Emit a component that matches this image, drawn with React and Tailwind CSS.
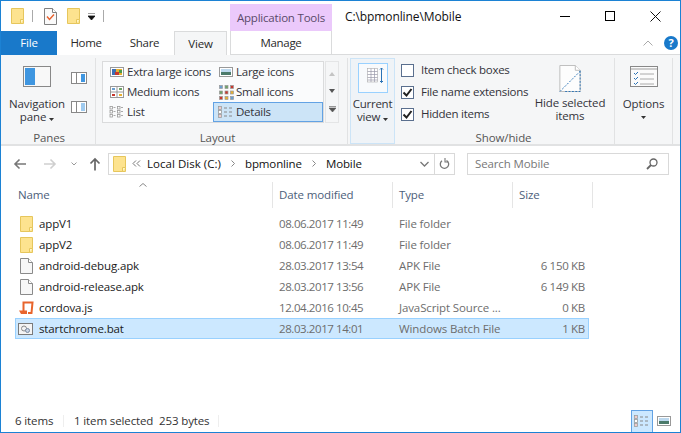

const Folder = ({ s = 1 }) => (
  <svg width={13 * s} height={16 * s} viewBox="0 0 13 16" className="shrink-0">
    <path d="M.5.5h12v15H.5z" fill="#fde38f" stroke="#e6c65c" />
    <path d="M9.5 15.5v-4h3" fill="#fff6c8" stroke="#e6c65c" />
  </svg>
);
const Doc = () => (
  <svg width="13" height="16" viewBox="0 0 13 16" className="shrink-0">
    <path d="M.5.5h8l4 4v11H.5z" fill="#f7f7f7" stroke="#8a8a8a" />
    <path d="M8.5.5v4h4" fill="#fff" stroke="#8a8a8a" />
  </svg>
);
const CheckDoc = () => (
  <svg width="13" height="17" viewBox="0 0 13 17" className="shrink-0">
    <path d="M.5.5h8l4 4v12H.5z" fill="#fafafa" stroke="#808080" />
    <path d="M8.5.5v4h4" fill="#fff" stroke="#808080" />
    <path d="M3 8.5l2.5 3L10 6.5" fill="none" stroke="#e8602c" strokeWidth="1.4" />
  </svg>
);
const Caret = ({ c = "#333" }) => (
  <svg width="5" height="3" viewBox="0 0 5 3" className="inline-block shrink-0"><path d="M0 0h5L2.5 3z" fill={c} /></svg>
);
const ListGlyph = ({ w = 18 }) => (
  <svg width={w} height="13" viewBox="0 0 18 13" className="shrink-0">
    {[1, 5, 9].map((y) => (
      <g key={y}>
        <rect x="1.5" y={y - 0.5} width="3" height="3" fill="#fff" stroke="#999" strokeWidth=".8" />
        <path d={`M7 ${y + 1}h3M12 ${y + 1}h3`} stroke="#888" />
      </g>
    ))}
    <rect x="2.5" y="1.5" width="1" height="1" fill="#c33" />
    <rect x="2.5" y="9.5" width="1" height="1" fill="#c33" />
  </svg>
);
const ListIcon = () => (
  <svg width="18" height="13" viewBox="0 0 18 13" className="shrink-0">
    {[2, 9.5].map((x) => [0.5, 4.5, 8.5].map((y) => (
      <g key={x + "" + y}>
        <rect x={x} y={y} width="2.5" height="2.5" fill="#fff" stroke="#999" strokeWidth=".8" />
        <path d={`M${x + 3.5} ${y + 1}h2`} stroke="#aaa" />
      </g>
    )))}
  </svg>
);
const Pic = ({ w = 14, h = 10, kind = 0 }) => (
  <svg width={w} height={h} viewBox="0 0 14 10" className="shrink-0">
    <rect x=".5" y=".5" width="13" height="9" fill="#fff" stroke="#999" />
    {kind === 0 ? (
      <>
        <rect x="2" y="2" width="10" height="6" fill="#e8b030" />
        <rect x="2" y="2" width="4" height="6" fill="#3b6fb5" />
        <rect x="5" y="5" width="4" height="3" fill="#c8382e" />
        <rect x="9" y="3" width="3" height="3" fill="#4c9a4a" />
      </>
    ) : (
      <>
        <rect x="2" y="2" width="10" height="3" fill="#bcd8ee" />
        <rect x="2" y="5" width="10" height="3" fill="#4b7a6a" />
      </>
    )}
  </svg>
);
const Grid4 = () => (
  <svg width="14" height="12" viewBox="0 0 14 12" className="shrink-0">
    <rect x=".5" y=".5" width="13" height="11" fill="#fff" stroke="#999" />
    <path d="M7 .5v11M.5 6h13" stroke="#999" />
    <rect x="2" y="2" width="3" height="2" fill="#6a9fd0" />
    <rect x="9" y="2" width="3" height="2" fill="#6fa36a" />
    <rect x="2" y="8" width="3" height="2" fill="#c8382e" />
    <rect x="9" y="8" width="3" height="2" fill="#e8b030" />
  </svg>
);
const Grid9 = () => (
  <svg width="15" height="15" viewBox="0 0 15 15" className="shrink-0">
    {[0, 5.5, 11].map((y, i) => [0, 5.5, 11].map((x, j) => (
      <rect key={i + "-" + j} x={x + .5} y={y + .5} width="3" height="3" fill={["#6a9fd0", "#6fa36a", "#c8382e", "#e8b030"][(i + j) % 4]} stroke="#999" strokeWidth=".7" />
    )))}
  </svg>
);

const GalleryItem = ({ icon, label, active, right }) => (
  <div className={`flex items-center h-5 w-[110px] ${active ? "bg-[#cce4f7] outline outline-1 outline-[#62a2e4] -outline-offset-1" : ""}`}>
    <div className={`${right ? "w-[23px]" : "w-[24px]"} pl-[3px] flex justify-center shrink-0`}>{icon}</div>
    <span className="whitespace-nowrap tracking-[-0.25px]">{label}</span>
  </div>
);
const Check = ({ on }) => (
  <span className="w-[13px] h-[13px] border border-[#5a6f8e] bg-white flex items-center justify-center shrink-0">
    {on && (
      <svg width="11" height="11" viewBox="0 0 11 11"><path d="M1.5 5.5l3 3 5-6.5" fill="none" stroke="#222" strokeWidth="2" /></svg>
    )}
  </span>
);
const Row = ({ icon, name, date, type, size, sel }) => (
  <div className={`flex items-center h-[21px] w-[574px] text-[#6d6d6d] ${sel ? "bg-[#cce8ff] outline outline-1 outline-[#99d1ff] -outline-offset-1" : ""}`}>
    <div className="w-[24px] pl-[5px] flex justify-start items-center shrink-0">{icon}</div>
    <div className="w-[240px] text-[#1a1a1a] whitespace-nowrap">{name}</div>
    <div className="w-[120px] whitespace-nowrap tracking-[-0.42px]">{date}</div>
    <div className="w-[113px] whitespace-nowrap">{type}</div>
    <div className="w-[73px] text-right whitespace-nowrap tracking-[-0.3px]">{size}</div>
  </div>
);

export default function App() {
  return (
    <div className="w-[681px] h-[433px] bg-white flex flex-col overflow-hidden border border-[#1c82d4] text-[11.5px] leading-none text-[#2a2a2a]" style={{ fontFamily: '"Open Sans","Noto Sans",sans-serif', letterSpacing: "-0.12px" }}>
      {/* Title bar */}
      <div className="h-[30px] flex items-stretch shrink-0">
        <div className="flex items-center w-[229px] pl-[10px]">
          <Folder />
          <span className="w-px h-[12px] bg-[#aaa] ml-[8px]" />
          <span className="ml-[11px]"><CheckDoc /></span>
          <span className="ml-[10px]"><Folder /></span>
          <svg width="7" height="7" viewBox="0 0 7 7" className="ml-[8px]"><path d="M0 0h7M0 3h7L3.500 7z" stroke="#111" strokeWidth=".8" fill="#111" /></svg>
          <span className="w-px h-[12px] bg-[#aaa] ml-[8px]" />
        </div>
        <div className="w-[102px] mt-[3px] bg-[#ebc9fb] flex items-center justify-center text-[#5a4a6a] whitespace-nowrap tracking-[-0.2px]">Application Tools</div>
        <div className="flex-1 pl-[13px] pt-[1px] flex items-center text-[#111] whitespace-nowrap text-[12px] tracking-[-0.1px]">C:\bpmonline\Mobile</div>
        <div className="flex items-start w-[138px] pt-[8px]">
          <div className="w-[45px] h-[14px] flex items-center justify-center"><span className="w-[10px] h-px bg-black" /></div>
          <div className="w-[46px] h-[14px] flex items-center justify-center"><span className="w-[10px] h-[10px] border border-black" /></div>
          <div className="w-[45px] h-[14px] flex items-center justify-center">
            <svg width="11" height="11" viewBox="0 0 11 11"><path d="M.5.5l10 10M10.500.5l-10 10" stroke="#111" /></svg>
          </div>
        </div>
      </div>

      {/* Tabs */}
      <div className="h-[24px] flex items-stretch shrink-0 relative z-10">
        <div className="w-[56px] bg-[#1979ca] text-white flex items-center justify-center">File</div>
        <div className="w-[58px] flex items-center justify-center tracking-[-0.35px]">Home</div>
        <div className="w-[59px] flex items-center justify-center tracking-[-0.3px]">Share</div>
        <div className="w-[53px] border border-b-0 border-[#dadbdc] bg-[#f5f6f7] flex items-center justify-center h-[24px]">View</div>
        <div className="w-[3px]" />
        <div className="w-[102px] border-x border-[#dadbdc] flex items-center justify-center border-b bg-white tracking-[-0.3px]">Manage</div>
        <div className="flex-1 border-b border-[#dadbdc] flex items-center justify-end pr-[2px]">
          <svg width="10" height="6" viewBox="0 0 10 6" className="mr-[11px]"><path d="M.5 5.500L5 1l4.500 4.500" fill="none" stroke="#aaa" /></svg>
          <span className="w-[14px] h-[14px] rounded-full bg-[#1979ca] text-white flex items-center justify-center text-[11px] font-bold">?</span>
        </div>
      </div>

      {/* Ribbon */}
      <div className="h-[91px] bg-[#f5f6f7] border-b-2 border-[#e1e2e3] flex shrink-0 text-[#33333a]">
        {/* Panes */}
        <div className="w-[95px] flex flex-col border-r border-[#e1e2e3] mt-[3px]">
          <div className="flex-1 flex pl-[8px]">
            <div className="w-[56px] flex flex-col items-center">
              <svg width="28" height="21" viewBox="0 0 28 21" className="mt-[8px]">
                <rect x=".5" y=".5" width="27" height="20" fill="#f8f8f8" stroke="#888" />
                <rect x="2" y="2" width="10" height="17" fill="#3f96e0" />
              </svg>
              <div className="text-center leading-[13px] mt-[10px] whitespace-nowrap">Navigation<br />pane <span className="align-middle"><Caret /></span></div>
            </div>
            <div className="flex flex-col gap-[17px] mt-[14px] ml-[6px]">
              <svg width="16" height="12" viewBox="0 0 16 12"><rect x=".5" y=".5" width="15" height="11" fill="#fff" stroke="#888" /><rect x="10" y="2" width="4" height="8" fill="#3f96e0" /><path d="M5.500 1v10" stroke="#888" /></svg>
              <svg width="16" height="12" viewBox="0 0 16 12"><rect x=".5" y=".5" width="15" height="11" fill="#fff" stroke="#888" /><path d="M5.500 1v10" stroke="#888" /><path d="M10 3h4M10 5h4M10 7h4M10 9h4" stroke="#3f96e0" /></svg>
            </div>
          </div>
          <div className="text-center pb-[1px] pl-[2px] text-[#555]">Panes</div>
        </div>
        {/* Layout */}
        <div className="w-[252px] flex flex-col border-r border-[#e1e2e3] mt-[3px]">
          <div className="flex-1 flex pl-[6px] pt-[3px]">
            <div className="w-[222px] h-[62px] border border-[#dadbdc] bg-[#fafbfc] flex flex-wrap content-start">
              <GalleryItem icon={<Pic />} label="Extra large icons" />
              <GalleryItem right icon={<Pic kind={1} />} label="Large icons" />
              <GalleryItem icon={<Grid4 />} label="Medium icons" />
              <GalleryItem right icon={<Grid9 />} label="Small icons" />
              <GalleryItem icon={<ListIcon />} label="List" />
              <GalleryItem right active icon={<ListGlyph />} label="Details" />
            </div>
            <div className="w-[14px] h-[62px] ml-px border border-[#e4e5e6] flex flex-col items-center justify-around py-[3px]">
              <svg width="6" height="4" viewBox="0 0 6 4"><path d="M0 4h6L3 0z" fill="#c4c4c4" /></svg>
              <svg width="6" height="4" viewBox="0 0 6 4"><path d="M0 0h6L3 4z" fill="#555" /></svg>
              <svg width="7" height="6" viewBox="0 0 7 6"><path d="M0 .5h7M0 2h7L3.500 6z" stroke="#555" strokeWidth=".6" fill="#555" /></svg>
            </div>
          </div>
          <div className="text-center pb-[1px] text-[#555] pr-[8px]">Layout</div>
        </div>
        {/* Current view */}
        <div className="w-[45px] ml-[2px] mt-[3px] border border-[#cce4f7] bg-[#eff3f7] flex flex-col items-center">
          <div className="w-[30px] h-[30px] mt-[4px] border border-[#99d1ff] bg-[#f8fafc] flex items-start justify-center pt-[3px]">
            <svg width="24" height="17" viewBox="0 0 24 17">
              <rect x="6.500" y="1.500" width="10" height="13.500" fill="#fff" stroke="#aaa" strokeWidth=".6" />
              <path d="M6.500 4.500h10M6.500 7.500h10M6.500 10.500h10M6.500 13h10M10 1.500v13.500M13.500 1.500v13.500" stroke="#99a" strokeWidth=".7" />
              <path d="M20.500 1v14.500M19 2.500L20.500 1 22 2.500M19 14L20.500 15.500 22 14" fill="none" stroke="#2a72b5" />
            </svg>
          </div>
          <div className="text-center leading-[13px] mt-[4px] whitespace-nowrap tracking-[-0.25px]">Current<br />view <span className="align-middle"><Caret /></span></div>
        </div>
        {/* Show/hide */}
        <div className="w-[220px] flex flex-col border-r border-[#e1e2e3] mt-[3px]">
          <div className="flex-1 flex">
            <div className="flex flex-col w-[139px] pl-[6px] pt-[1px]">
              {[["Item check boxes", false], ["File name extensions", true], ["Hidden items", true]].map(([t, on]) => (
                <div key={t} className="flex items-center h-[22px] gap-[7px] whitespace-nowrap tracking-[-0.27px]"><Check on={on} /><span>{t}</span></div>
              ))}
            </div>
            <div className="flex flex-col items-center w-[72px]">
              <svg width="22" height="27" viewBox="0 0 22 28" className="mt-[7px]">
                <path d="M.5.5h16l5 5v22H.5z" fill="#fdfdfd" stroke="#bbb" />
                <path d="M16.500.5v5h5" fill="#fff" stroke="#bbb" />
                <path d="M.5 27.500l21-21M6 27.500h15.500V6" fill="none" stroke="#2a72b5" strokeDasharray="2 1.5" />
              </svg>
              <div className="text-center leading-[13px] mt-[4px] whitespace-nowrap">Hide selected<br />items</div>
            </div>
          </div>
          <div className="text-center pb-[1px] pr-[2px] text-[#555]">Show/hide</div>
        </div>
        {/* Options */}
        <div className="w-[58px] flex flex-col items-center border-r border-[#e1e2e3] mt-[3px]">
          <svg width="28" height="21" viewBox="0 0 28 21" className="mt-[8px]">
            <rect x=".5" y=".5" width="27" height="20" fill="#fbfbfb" stroke="#888" />
            <path d="M1 3h26" stroke="#ccc" strokeWidth="2" />
            <path d="M4 7l1.500 1.500L8 6M4 12l1.500 1.500L8 11M4 17l1.500 1.500L8 16" fill="none" stroke="#2a72b5" />
            <path d="M10 8h14M10 13h14M10 18h14" stroke="#aaa" />
          </svg>
          <div className="text-center leading-[13px] mt-[10px]">Options<br /><Caret /></div>
        </div>
      </div>

      {/* Nav bar */}
      <div className="h-[35px] flex items-center shrink-0">
        <svg width="14" height="12" viewBox="0 0 14 12" className="ml-[12px]"><path d="M13 6H2M6.500 1.500L2 6l4.500 4.500" fill="none" stroke="#777" strokeWidth="1.6" /></svg>
        <svg width="14" height="12" viewBox="0 0 14 12" className="ml-[16px]"><path d="M1 6h11M7.500 1.500L12 6l-4.500 4.500" fill="none" stroke="#cfcfcf" strokeWidth="1.6" /></svg>
        <svg width="6" height="4" viewBox="0 0 6 4" className="ml-[14px]"><path d="M.5.5L3 3 5.500.5" fill="none" stroke="#999" /></svg>
        <svg width="12" height="14" viewBox="0 0 12 14" className="ml-[12px]"><path d="M6 13.500V2M1.500 6.500L6 2l4.500 4.500" fill="none" stroke="#666" strokeWidth="1.7" /></svg>
        <div className="ml-[7px] w-[347px] h-[22px] border border-[#d9d9d9] flex items-center text-[#111]">
          <span className="ml-[4px]"><Folder /></span>
          <svg width="9" height="7" viewBox="0 0 9 7" className="ml-[6px]"><path d="M4 .5L1 3.500l3 3M8 .5L5 3.500l3 3" fill="none" stroke="#777" /></svg>
          <span className="ml-[6px] whitespace-nowrap tracking-[0.03px]">Local Disk (C:)</span>
          <svg width="4" height="7" viewBox="0 0 4 7" className="mx-[10px]"><path d="M.5.5L3.500 3.500.5 6.500" fill="none" stroke="#888" /></svg>
          <span>bpmonline</span>
          <svg width="4" height="7" viewBox="0 0 4 7" className="mx-[10px]"><path d="M.5.5L3.500 3.500.5 6.500" fill="none" stroke="#888" /></svg>
          <span>Mobile</span>
          <div className="flex-1 flex justify-end items-center h-full">
            <svg width="9" height="6" viewBox="0 0 9 6" className="mr-[5px]"><path d="M.5 1l4 4 4-4" fill="none" stroke="#777" strokeWidth="1.3" /></svg>
            <div className="w-[20px] h-full border-l border-[#d9d9d9] flex items-center justify-center">
              <svg width="11" height="12" viewBox="0 0 11 12"><path d="M7.500 2.500A4.200 4.200 0 1 1 3 2.800" fill="none" stroke="#777" strokeWidth="1.3" /><path d="M6 0v4h3" fill="none" stroke="#777" strokeWidth="1.1" /></svg>
            </div>
          </div>
        </div>
        <div className="ml-[12px] w-[202px] h-[22px] border border-[#d9d9d9] flex items-center justify-between pl-[7px] pr-[10px] text-[#777]">
          <span>Search Mobile</span>
          <svg width="12" height="12" viewBox="0 0 12 12"><circle cx="7.500" cy="4.500" r="3.500" fill="none" stroke="#666" strokeWidth="1.3" /><path d="M5 7l-4 4" stroke="#666" strokeWidth="1.8" /></svg>
        </div>
      </div>

      {/* Column header */}
      <div className="h-[26px] flex items-stretch pl-[14px] shrink-0 mt-[1px] text-[#4c607a] relative">
        <div className="w-[258px] pl-[3px] flex items-center border-r border-[#e5e5e5]">Name</div>
        <svg width="8" height="4" viewBox="0 0 8 4" className="absolute left-[138px] top-[1px]"><path d="M.5 3.500L4 .5l3.500 3" fill="none" stroke="#888" /></svg>
        <div className="w-[120px] pl-[6px] flex items-center border-r border-[#e5e5e5]">Date modified</div>
        <div className="w-[120px] pl-[6px] flex items-center border-r border-[#e5e5e5]">Type</div>
        <div className="w-[80px] pl-[6px] flex items-center border-r border-[#e5e5e5]">Size</div>
      </div>

      {/* Rows */}
      <div className="flex-1 pl-[14px] pt-[5px]">
        <Row icon={<Folder />} name="appV1" date="08.06.2017 11:49" type="File folder" size="" />
        <Row icon={<Folder />} name="appV2" date="08.06.2017 11:49" type="File folder" size="" />
        <Row icon={<Doc />} name="android-debug.apk" date="28.03.2017 13:54" type="APK File" size="6 150 KB" />
        <Row icon={<Doc />} name="android-release.apk" date="28.03.2017 13:56" type="APK File" size="6 149 KB" />
        <Row icon={
          <svg width="15" height="15" viewBox="0 0 15 15" className="-ml-px"><path d="M4.500 12V2.500h9L12.500 13H9" fill="none" stroke="#e8642c" strokeWidth="2" /><path d="M0 10.500h8V14H2z" fill="#e8642c" /></svg>
        } name="cordova.js" date="12.04.2016 10:45" type="JavaScript Source ..." size="0 KB" />
        <Row sel icon={
          <svg width="15" height="12" viewBox="0 0 15 12" className="-ml-[2px]"><rect x=".5" y=".5" width="14" height="11" fill="#f4f4f4" stroke="#7a7a7a" /><circle cx="6" cy="5.500" r="2.500" fill="none" stroke="#8a8a8a" /><circle cx="9.500" cy="7.500" r="2" fill="#c9d4e4" stroke="#7a8aa0" /></svg>
        } name="startchrome.bat" date="28.03.2017 14:01" type="Windows Batch File" size="1 KB" />
      </div>

      {/* Status */}
      <div className="h-[22px] flex items-center shrink-0 pl-[14px] text-[#333]">
        <span className="w-[48px] whitespace-nowrap">6 items</span>
        <span className="w-px h-[12px] bg-[#eee]" />
        <span className="ml-[10px] w-[85px] whitespace-nowrap">1 item selected</span>
        <span className="w-[59px] whitespace-nowrap">253 bytes</span>
        <span className="w-px h-[12px] bg-[#eee]" />
        <div className="flex-1 flex justify-end items-stretch h-full pr-[5px]">
          <div className="w-[22px] bg-[#cce8ff] border border-[#62a2e4] border-b-0 flex items-center justify-center"><ListGlyph w={18} /></div>
          <div className="w-[22px] flex items-center justify-center"><Pic w={14} h={10} kind={1} /></div>
        </div>
      </div>
    </div>
  );
}
